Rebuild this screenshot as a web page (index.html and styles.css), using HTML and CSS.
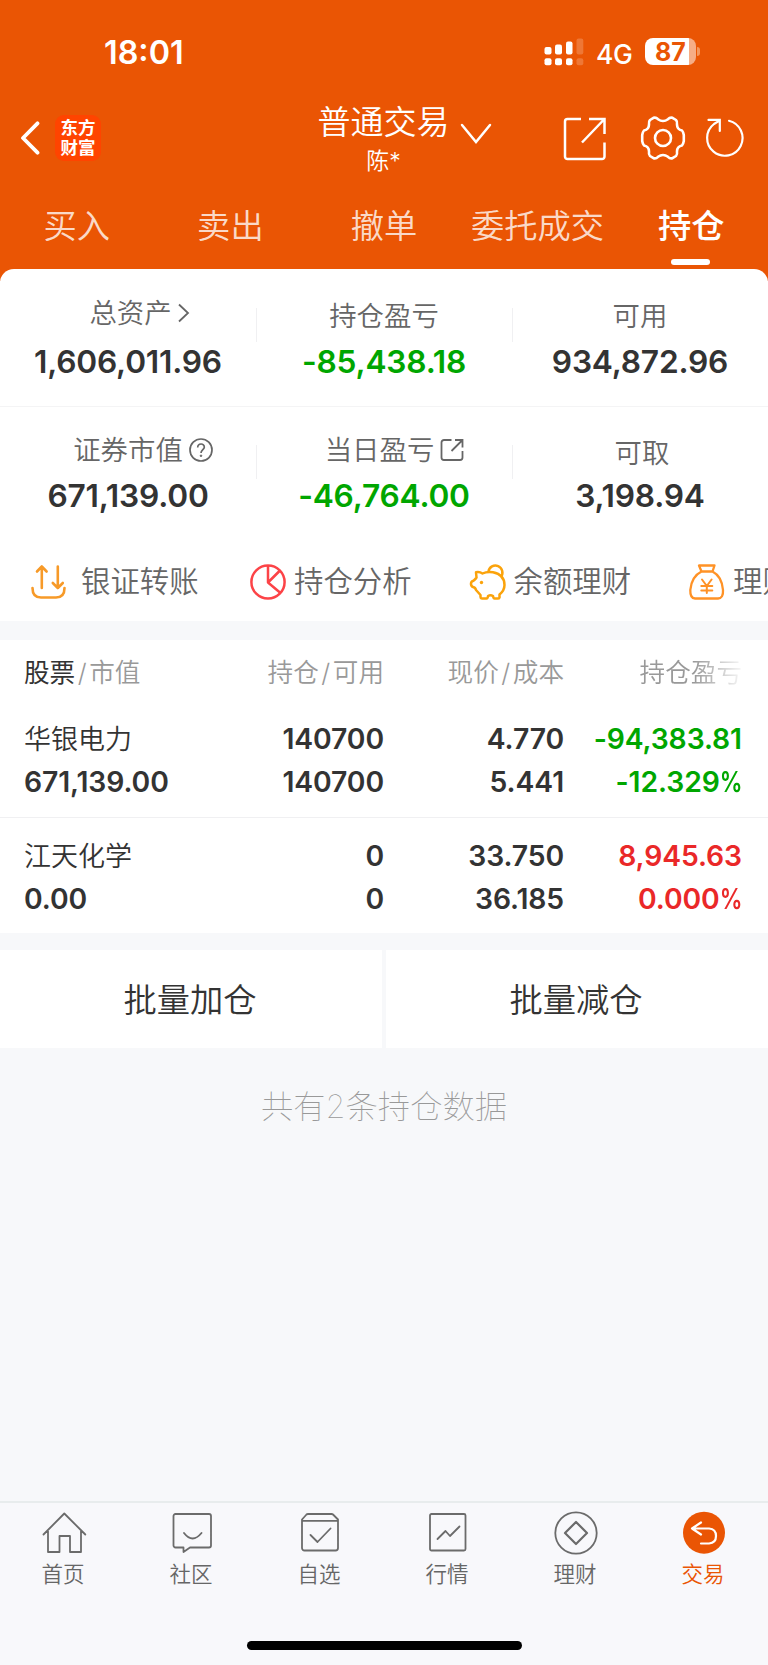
FILE: index.html
```html
<!DOCTYPE html>
<html lang="zh-CN">
<head>
    <meta charset="UTF-8">
    <meta name="viewport" content="width=device-width, initial-scale=1">
    <title>普通交易 | 持仓</title>
    <link rel="stylesheet" href="styles.css">
</head>
<body>
<div class="app">
    <header class="header">
        <div class="status">
            <span class="time">18:01</span>
            <div class="status-right">
                <svg class="signal" width="40" height="28" viewBox="0 0 40 28" fill="#fff">
                    <rect x="0.5" y="9" width="7" height="7.5" rx="2"/>
                    <rect x="11" y="6.5" width="7" height="10" rx="2"/>
                    <rect x="22" y="3.5" width="6.5" height="13" rx="2"/>
                    <rect x="0.5" y="20.3" width="7" height="7" rx="2"/>
                    <rect x="11" y="20.3" width="7" height="7" rx="2"/>
                    <rect x="22" y="20.3" width="6.5" height="7" rx="2"/>
                    <rect x="32.5" y="0.5" width="6.8" height="16" rx="2" opacity=".2"/>
                    <rect x="32.5" y="20.3" width="6.8" height="7" rx="2" opacity=".2"/>
                </svg>
                <span class="network">4G</span>
                <div class="battery"><span>87</span></div>
                <div class="battery-cap"></div>
            </div>
        </div>

        <div class="nav">
            <div class="nav-left">
                <svg width="20" height="36" viewBox="0 0 20 36" fill="none" stroke="#fff" stroke-width="3.8" stroke-linecap="round" stroke-linejoin="round"><path d="M17.500 3.300L3 18l14.500 14.700"/></svg>
                <div class="logo">东方<br>财富</div>
            </div>
            <div class="nav-title">
                <div class="title">普通交易</div>
                <div class="user">陈*</div>
            </div>
            <svg class="arrow-down" width="32" height="22" viewBox="0 0 32 22" fill="none" stroke="#fff" stroke-width="2.500" stroke-linecap="round"><path d="M2 2l14 17L30 2"/></svg>
            <div class="nav-right">
                <svg class="ic-share" width="44" height="44" viewBox="0 0 44 44" fill="none" stroke="#fff" stroke-width="2.500"><path d="M18 2H4.500A2.500 2.500 0 0 0 2 4.500v35a2.500 2.500 0 0 0 2.500 2.500H39a2.500 2.500 0 0 0 2.500-2.500V25.500M26 2h15.500v15M41 2.500L19 25.500"/></svg>
                <svg class="ic-gear" width="46" height="46" viewBox="0 0 46 46" fill="none" stroke="#fff" stroke-width="2.600" stroke-linejoin="round"><circle cx="23" cy="23" r="8"/><path d="M13.500 2.800Q16 2 18 4.200Q23 7.800 28 4.200Q30 2 32.500 2.800L36 5Q37.500 6.500 37 9.500Q37 14.500 42 15.500Q43.300 17 43.800 20V26Q43.300 29 42 30.500Q37 31.500 37 36.500Q37.500 39.500 36 41L32.500 43.200Q30 44 28 41.800Q23 38.200 18 41.800Q16 44 13.500 43.200L10 41Q8.500 39.500 9 36.500Q9 31.500 4 30.500Q2.700 29 2.200 26V20Q2.700 17 4 15.500Q9 14.500 9 9.500Q8.500 6.500 10 5Z"/></svg>
                <svg class="ic-refresh" width="42" height="42" viewBox="0 0 42 42" fill="none" stroke="#fff" stroke-width="2.200" stroke-linecap="round"><path d="M25 3.800A17.700 17.700 0 1 1 10 7L15.500 3.600M4.500 2.900H15.800V14"/></svg>
            </div>
        </div>

        <div class="tabs">
            <a class="tab">买入</a>
            <a class="tab">卖出</a>
            <a class="tab">撤单</a>
            <a class="tab">委托成交</a>
            <a class="tab active">持仓</a>
        </div>
    </header>

    <section class="assets">
        <div class="assets-row">
            <div class="asset">
                <div class="label has-icon">总资产<svg class="ic-more" width="12" height="20" viewBox="0 0 12 20" fill="none" stroke="#666" stroke-width="1.800"><path d="M1 1.500l9 8.500-9 8.500"/></svg></div>
                <div class="value">1,606,011.96</div>
            </div>
            <div class="asset">
                <div class="label">持仓盈亏</div>
                <div class="value down">-85,438.18</div>
            </div>
            <div class="asset">
                <div class="label">可用</div>
                <div class="value">934,872.96</div>
            </div>
        </div>
        <div class="assets-row second">
            <div class="asset">
                <div class="label has-icon wide">证券市值<svg class="ic-help" width="24" height="24" viewBox="0 0 24 24" fill="none" stroke="#666" stroke-width="1.700"><circle cx="12" cy="12" r="11"/><path d="M8.700 9.600C8.700 4.800 15.500 5 15.300 9.200C15.200 11.500 12 11.800 12 15"/><circle cx="12" cy="17.800" r=".8" fill="#666" stroke-width="1"/></svg></div>
                <div class="value">671,139.00</div>
            </div>
            <div class="asset">
                <div class="label has-icon today">当日盈亏<svg class="ic-out" width="24" height="24" viewBox="0 0 24 24" fill="none" stroke="#666" stroke-width="1.800"><path d="M11.500 2H4a2.500 2.500 0 0 0-2.500 2.500V19.500A2.500 2.500 0 0 0 4 22h16a2.500 2.500 0 0 0 2.500-2.500V13M15 2h7.500v7.500M22 2.500L11.500 13"/></svg></div>
                <div class="value down">-46,764.00</div>
            </div>
            <div class="asset">
                <div class="label cash">可取</div>
                <div class="value">3,198.94</div>
            </div>
        </div>

        <div class="shortcuts">
            <a class="shortcut first">
                <svg width="38" height="38" viewBox="0 0 38 38" fill="none" stroke="#f79a28" stroke-width="2.600" stroke-linecap="round" stroke-linejoin="round"><path d="M2.500 25C2.500 31.500 5 34.500 11 34.500H26C32 34.500 34.500 31.500 34.500 25M11.800 25V3.500M7 8.500l4.800-5 4.800 5M27.800 3.500V25M22.800 20l5 5 5-5"/></svg>
                <span>银证转账</span>
            </a>
            <a class="shortcut">
                <svg width="38" height="38" viewBox="0 0 38 38" fill="none" stroke="#fc4347" stroke-width="2.500" stroke-linejoin="round"><circle cx="19" cy="19" r="16.600"/><path d="M19 2.500V19.500L30.500 8M19 19.500L31.500 30"/></svg>
                <span>持仓分析</span>
            </a>
            <a class="shortcut">
                <svg width="38" height="38" viewBox="0 0 38 38" fill="none" stroke="#fba30b" stroke-width="2.500" stroke-linejoin="round"><path d="M19.500 8.500A7 7 0 1 1 32 13.800"/><path d="M7 9.300Q10.500 8.500 13.500 10.500Q18 8.200 24 9.200Q35.500 11.500 35.500 22Q35.500 27.500 30.500 31.500V34.500Q30 35.800 28 35.500H25.500Q24.500 35.500 24 33Q21.500 31.500 19 33Q18.800 35.500 17.500 35.500H13Q11.500 35.300 11.500 34V32L7 27Q6.500 24.500 4 24Q1.800 23 2 20.500Q2.100 18.500 4.500 17.800Q6.300 16.500 7.500 14.500Z"/><circle cx="12.500" cy="19.500" r="1.700" fill="#fba30b" stroke="none"/></svg>
                <span>余额理财</span>
            </a>
            <a class="shortcut">
                <svg width="38" height="38" viewBox="0 0 38 38" fill="none" stroke="#ff9226" stroke-width="2.300" stroke-linejoin="round" stroke-linecap="round"><path d="M11 2.500H26.500L24.500 8.500H13.500ZM13.500 8.500Q3.500 13.500 2.300 27Q2 35.300 7 35.500H30Q35.500 35.300 35 27Q34 13.500 24.500 8.500"/><path d="M14 16.500l4.800 6.500 4.800-6.500M13.300 23h11M13.300 27.500h11M18.800 23v7" stroke-width="2"/></svg>
                <span>理财产品</span>
            </a>
        </div>
    </section>

    <section class="positions">
        <div class="grid thead">
            <div><b>股票</b><i>/</i>市值</div>
            <div>持仓<i>/</i>可用</div>
            <div>现价<i>/</i>成本</div>
            <div class="faded">持仓盈亏</div>
        </div>
        <div class="grid stock">
            <div class="name">华银电力</div>
            <div>140700</div>
            <div>4.770</div>
            <div class="down">-94,383.81</div>
            <div>671,139.00</div>
            <div>140700</div>
            <div>5.441</div>
            <div class="down">-12.329<span class="percent">%</span></div>
        </div>
        <div class="grid stock">
            <div class="name">江天化学</div>
            <div>0</div>
            <div>33.750</div>
            <div class="up">8,945.63</div>
            <div>0.00</div>
            <div>0</div>
            <div>36.185</div>
            <div class="up">0.000<span class="percent">%</span></div>
        </div>
    </section>

    <div class="batch">
        <button>批量加仓</button>
        <button>批量减仓</button>
    </div>

    <p class="summary">共有2条持仓数据</p>

    <footer class="tabbar">
        <nav class="tabbar-items">
            <a>
                <svg width="46" height="46" viewBox="0 0 46 46"><path d="M2.500 24.500L23.300 3.500l21 21M7 21v21h11.500V26h10.500v16h11V21"/></svg>
                <span>首页</span>
            </a>
            <a>
                <svg width="46" height="46" viewBox="0 0 46 46"><path d="M6.500 4H40a2 2 0 0 1 2 2V35.500a2 2 0 0 1-2 2H21L14.500 42V37.500H6.500a2 2 0 0 1-2-2V6a2 2 0 0 1 2-2M15 23Q23.500 34 32.500 23"/></svg>
                <span>社区</span>
            </a>
            <a>
                <svg width="46" height="46" viewBox="0 0 46 46"><path d="M5 10.800h36V38a2.500 2.500 0 0 1-2.500 2.500H7.500A2.500 2.500 0 0 1 5 38V9.500L9.500 4.500Q10 4 11 4H34.500Q35.500 4 36 4.500L41 9.500V12M13.500 25l7 7L33.500 18.500"/></svg>
                <span>自选</span>
            </a>
            <a>
                <svg width="46" height="46" viewBox="0 0 46 46"><rect x="5" y="4" width="35.500" height="36.500" rx="1.500"/><path d="M12.500 29l8-8 4.500 5L34.500 16.500"/></svg>
                <span>行情</span>
            </a>
            <a>
                <svg width="46" height="46" viewBox="0 0 46 46"><circle cx="23" cy="23" r="20.700"/><path d="M23 12L34 23 23 34 12 23Z" stroke-width="2.200"/></svg>
                <span>理财</span>
            </a>
            <a class="on">
                <svg width="46" height="46" viewBox="0 0 46 46"><circle cx="23" cy="22.700" r="21" fill="#ea5504" stroke="none"/><path d="M20 12.500L11 18.500l9 6M11 18.500H28Q35 19 35 26Q35 33 28 33.500H20" stroke="#fff" stroke-width="2.200"/></svg>
                <span>交易</span>
            </a>
        </nav>
        <div class="home-bar"></div>
    </footer>
</div>
</body>
</html>
```
FILE: styles.css
```css
* {
    box-sizing: border-box;
}

body {
    margin: 0;
    background: #f7f8fa;
    color: #333;
    font-family: Inter, "Noto Sans CJK SC", sans-serif;
    font-weight: 350;
}

svg {
    display: block;
    flex-shrink: 0;
}

.app {
    display: flex;
    flex-direction: column;
    width: 768px;
    height: 1665px;
    overflow: hidden;
    background: #f7f8fa;
}

/* header */
.header {
    height: 281px;
    flex-shrink: 0;
    background: #ea5504;
    color: #fff;
}

.status {
    display: flex;
    justify-content: space-between;
    height: 104px;
    padding: 37px 68px 0 104px;
}

.time {
    font-size: 32.3px;
    font-weight: 600;
    line-height: 31px;
}

.status-right {
    display: flex;
    align-items: center;
    height: 29px;
}

.network {
    width: 36px;
    margin: 4px 13px 0 12px;
    font-size: 26.5px;
    font-weight: 450;
    line-height: 28px;
    letter-spacing: -0.5px;
}

.battery {
    width: 51px;
    height: 27px;
    border-radius: 8px;
    background: linear-gradient(to right, #fff 44px, #f6ad86 44px);
    color: #ea5504;
    text-align: center;
    font-size: 25px;
    font-weight: 700;
    line-height: 28px;
}

.battery-cap {
    width: 3px;
    height: 9px;
    margin-left: 1px;
    border-radius: 0 4px 4px 0;
    background: #f3975f;
}

.nav {
    display: flex;
    height: 76px;
}

.nav-left {
    display: flex;
    align-items: flex-start;
    width: 317px;
    padding: 11px 0 0 20px;
}

.nav-left svg {
    margin: 5px 16px 0 0;
}

.logo {
    width: 46px;
    height: 46px;
    margin-left: -1px;
    padding-top: 3px;
    border-radius: 9px;
    background: #ff4400;
    text-align: center;
    font-size: 17.5px;
    font-weight: 700;
    line-height: 20px;
}

.nav-title {
    width: 133px;
    text-align: center;
}

.title {
    font-size: 33px;
    line-height: 37px;
    white-space: nowrap;
}

.user {
    font-size: 23px;
    line-height: 40px;
}

.arrow-down {
    margin: 19px 0 0 10px;
}

.nav-right {
    display: flex;
    margin-left: 71px;
    padding-top: 12px;
}

.ic-share {
    margin: 1px 0 0 0;
}

.ic-gear {
    margin-left: 33px;
    margin-top: -1px;
}

.ic-refresh {
    margin-left: 18px;
    margin-top: 1px;
}

.tabs {
    display: flex;
    height: 89px;
}

.tab {
    position: relative;
    flex: 1;
    text-align: center;
    font-size: 33.3px;
    line-height: 92px;
    white-space: nowrap;
    color: rgba(255, 255, 255, 0.8);
}

.tab.active {
    color: #fff;
    font-weight: 500;
}

.tab.active:after {
    content: '';
    position: absolute;
    left: 57px;
    top: 79px;
    width: 39px;
    height: 6px;
    border-radius: 3px;
    background: #fff;
}

/* assets */
.assets {
    flex-shrink: 0;
    height: 352px;
    margin-top: -12px;
    border-radius: 14px 14px 0 0;
    background: #fff;
    overflow: hidden;
}

.assets-row {
    display: flex;
    height: 138px;
    padding-top: 26px;
    border-bottom: 1px solid #f4f4f5;
}

.assets-row.second {
    height: 131px;
    border-bottom: 0;
    padding-top: 25px;
}

.asset {
    width: 256px;
    text-align: center;
}

.asset + .asset {
    background: linear-gradient(#f0f0f2, #f0f0f2) no-repeat 0 13px / 1px 34px;
}

.label {
    height: 40px;
    color: #666;
    font-size: 27.4px;
    line-height: 42px;
}

.label.has-icon {
    display: flex;
    justify-content: center;
    line-height: 37px;
    padding-left: 23px;
}

.ic-more {
    margin: 8px 0 0 6px;
}

.label.wide {
    padding-left: 30px;
}

.label.today {
    padding-left: 21px;
}

.label.cash {
    padding-left: 4px;
}

.ic-help {
    margin: 6px 0 0 6px;
}

.ic-out {
    margin: 6px 0 0 6px;
}

.value {
    font-size: 31.7px;
    font-weight: 600;
    line-height: 53px;
    letter-spacing: -0.2px;
}

.second .value {
    line-height: 48px;
}

.down {
    color: #00a600;
}

.up {
    color: #ea2828;
}

.shortcuts {
    display: flex;
    padding: 24px 0 0 30px;
    white-space: nowrap;
}

.shortcut {
    display: flex;
    align-items: flex-start;
    flex-shrink: 0;
    width: 219.5px;
    height: 38px;
    color: #666;
    font-size: 29.4px;
    line-height: 39px;
}

.shortcut.first {
    width: 219px;
}

.shortcut svg {
    margin-top: 1px;
}

.shortcut span {
    margin-left: 7px;
}

.shortcut.first span {
    margin-left: 13px;
}

/* positions */
.positions {
    flex-shrink: 0;
    height: 293px;
    margin-top: 19px;
    background: #fff;
}

.grid {
    display: grid;
    grid-template-columns: 200px 160px 180px 178px;
    padding-left: 24px;
    text-align: right;
}

.grid > :nth-child(4n + 1) {
    text-align: left;
}

.thead {
    height: 64px;
    color: #999;
    font-size: 25.6px;
    line-height: 65px;
}

.thead b {
    color: #333;
    font-weight: 400;
}

.thead i {
    display: inline-block;
    width: 14px;
    text-align: center;
    font-style: normal;
}

.faded {
    -webkit-mask-image: linear-gradient(to right, #000 130px, transparent 182px);
    mask-image: linear-gradient(to right, #000 130px, transparent 182px);
}

.stock {
    height: 113px;
    padding-top: 14px;
    grid-auto-rows: 43px;
    font-size: 28.3px;
    font-weight: 600;
    line-height: 43px;
    letter-spacing: -0.1px;
}

.stock + .stock {
    border-top: 1px solid #f0f0f2;
    padding-top: 17px;
}

.stock .name {
    font-size: 27px;
    font-weight: 350;
    letter-spacing: 0;
}

.percent {
    display: inline-block;
    margin-left: -6px;
    transform: scaleX(0.8);
    transform-origin: right;
}

/* batch buttons */
.batch {
    display: flex;
    flex-shrink: 0;
    gap: 4px;
    height: 98px;
    margin-top: 17px;
}

.batch button {
    flex: 1;
    border: 0;
    padding: 0 2px 4px 0;
    background: #fff;
    color: #333;
    font-family: inherit;
    font-weight: inherit;
    font-size: 33.3px;
}

.summary {
    margin: 40px 0 0;
    text-align: center;
    color: #999;
    font-size: 32.3px;
    font-weight: 100;
    line-height: 38px;
}

/* bottom bar */
.tabbar {
    height: 164px;
    margin-top: auto;
    border-top: 2px solid #e8eced;
    background: #f8f8fb;
}

.tabbar-items {
    display: flex;
    height: 138px;
    padding-top: 7px;
}

.tabbar-items a {
    display: flex;
    flex-direction: column;
    align-items: center;
    width: 128px;
    color: #666;
    font-size: 21.5px;
    line-height: 36px;
}

.tabbar-items span {
    padding-right: 2px;
}

.tabbar-items a.on {
    color: #ea5504;
}

.tabbar-items svg {
    fill: none;
    stroke: #6b6b6b;
    stroke-width: 1.8;
    stroke-linejoin: round;
    stroke-linecap: round;
}

.home-bar {
    width: 275px;
    height: 9px;
    margin: 0 auto;
    border-radius: 5px;
    background: #000;
}
```
